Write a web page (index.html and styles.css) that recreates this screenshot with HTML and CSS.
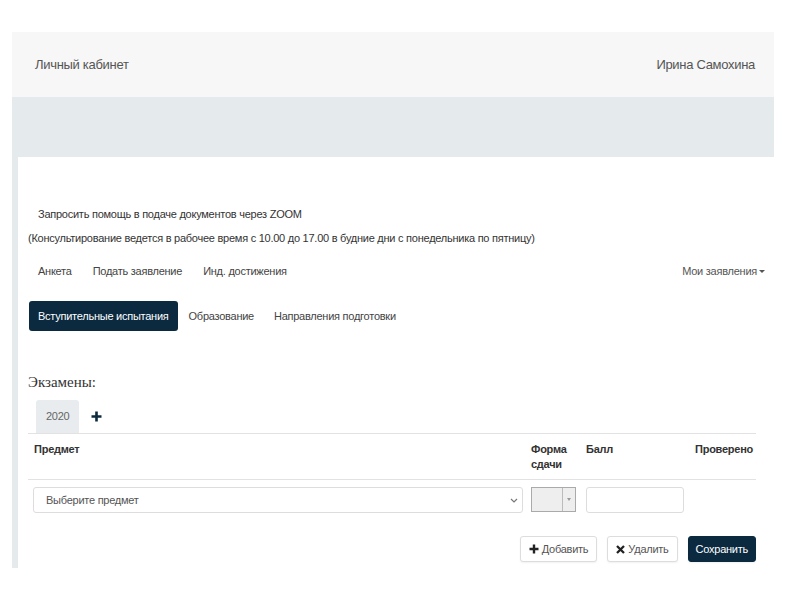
FILE: index.html
```html
<!DOCTYPE html>
<html lang="ru">

<head>
    <meta charset="UTF-8">
    <title>Личный кабинет</title>
    <link rel="stylesheet" href="styles.css">
</head>

<body>
    <div class="page">
        <header class="topbar">
            <span class="brand">Личный кабинет</span>
            <span class="user">Ирина Самохина</span>
        </header>
        <div class="band"></div>

        <div class="frame">
            <main class="card">
                <a class="help" href="#">Запросить помощь в подаче документов через ZOOM</a>
                <p class="note">(Консультирование ведется в рабочее время с 10.00 до 17.00 в будние дни с понедельника по пятницу)</p>

                <nav class="menu">
                    <div class="menu-left">
                        <a href="#">Анкета</a>
                        <a href="#">Подать заявление</a>
                        <a href="#">Инд. достижения</a>
                    </div>
                    <a href="#" class="dropdown">Мои заявления<span class="caret"></span></a>
                </nav>

                <div class="pills">
                    <a href="#" class="pill active">Вступительные испытания</a>
                    <a href="#" class="pill">Образование</a>
                    <a href="#" class="pill">Направления подготовки</a>
                </div>

                <h3 class="exams-title">Экзамены:</h3>
                <div class="year-tabs">
                    <span class="year-tab">2020</span>
                    <span class="add-year">
                        <svg width="11" height="11" viewBox="0 0 11 11"><path d="M5.5 0.5v10M0.5 5.5h10" stroke="#0b2a3f" stroke-width="2.6"/></svg>
                    </span>
                </div>

                <div class="grid head">
                    <div>Предмет</div>
                    <div>Форма<br>сдачи</div>
                    <div>Балл</div>
                    <div>Проверено</div>
                </div>
                <div class="grid row">
                    <div>
                        <div class="select">
                            <span>Выберите предмет</span>
                            <svg width="8" height="5" viewBox="0 0 8 5"><path d="M1 1l3 3 3-3" fill="none" stroke="#777" stroke-width="1.2"/></svg>
                        </div>
                    </div>
                    <div>
                        <div class="mini-select"><span class="mini-arrow"></span></div>
                    </div>
                    <div><input type="text" class="score"></div>
                    <div></div>
                </div>

                <div class="actions">
                    <button class="btn">
                        <svg width="10" height="10" viewBox="0 0 10 10"><path d="M5 0.5v9M0.5 5h9" stroke="#222" stroke-width="2.4"/></svg>
                        Добавить
                    </button>
                    <button class="btn">
                        <svg width="9" height="9" viewBox="0 0 9 9"><path d="M1 1l7 7M8 1l-7 7" stroke="#222" stroke-width="2.3"/></svg>
                        Удалить
                    </button>
                    <button class="btn dark">Сохранить</button>
                </div>
            </main>
        </div>
    </div>
</body>

</html>
```

FILE: styles.css
```css
* {
    margin: 0;
    padding: 0;
    box-sizing: border-box;
}

body {
    font-family: "Liberation Sans", Arial, sans-serif;
    font-size: 11px;
    letter-spacing: -0.25px;
    color: #444;
    background-color: #fff;
    padding-top: 32px;
}

a {
    text-decoration: none;
    color: #444;
}

.page {
    margin-left: 12px;
    width: 762px;
}

.topbar {
    height: 65px;
    background-color: #f7f7f7;
    display: flex;
    justify-content: space-between;
    align-items: center;
    padding: 0 19px 0 23px;
    font-size: 13px;
    letter-spacing: -0.3px;
    color: #555;
}

.band {
    height: 60px;
    background-color: #e5eaec;
}

.frame {
    background-color: #e5eaec;
    padding-left: 6px;
}

.card {
    background-color: #fff;
    height: 411px;
    padding: 49px 18px 0 10px;
}

.help {
    display: block;
    padding-left: 10px;
    line-height: 16px;
    color: #333;
}

.note {
    margin-top: 8px;
    line-height: 16px;
    color: #333;
}

.menu {
    display: flex;
    justify-content: space-between;
    align-items: center;
    margin-top: 16px;
    height: 17px;
}

.menu-left {
    display: flex;
    gap: 21px;
    padding-left: 10px;
}

.dropdown {
    color: #555;
    margin-right: -9px;
}

.caret {
    display: inline-block;
    margin-left: 2px;
    vertical-align: middle;
    border-top: 3px solid #555;
    border-left: 3px solid transparent;
    border-right: 3px solid transparent;
}

.pills {
    display: flex;
    align-items: center;
    gap: 2px;
    margin-top: 22px;
    margin-left: 1px;
}

.pill {
    padding: 0 9px;
    height: 30px;
    line-height: 30px;
}

.pill.active {
    background-color: #0b2a3f;
    color: #fff;
    border-radius: 3px;
}

.exams-title {
    font-family: "Liberation Serif", serif;
    font-weight: normal;
    font-size: 15px;
    letter-spacing: 0;
    color: #333;
    margin-top: 42px;
    line-height: 18px;
}

.year-tabs {
    display: flex;
    align-items: center;
    margin-top: 9px;
    margin-left: 8px;
    height: 33px;
}

.year-tab {
    background-color: #e8ecee;
    height: 33px;
    line-height: 33px;
    padding: 0 10px;
    border-radius: 3px 3px 0 0;
    color: #666;
}

.add-year {
    margin-left: 12px;
    display: flex;
}

.grid {
    display: grid;
    grid-template-columns: 497px 55px 109px 67px;
    border-top: 1px solid #e2e2e2;
}

.grid.head {
    height: 46px;
    padding-top: 8px;
    font-weight: bold;
    line-height: 15px;
    color: #333;
}

.grid > div {
    padding-left: 6px;
}

.grid.row {
    height: 40px;
    padding-top: 7px;
}

.grid.row > div:first-child {
    padding-left: 5px;
}

.select {
    height: 26px;
    width: 490px;
    border: 1px solid #ddd;
    border-radius: 3px;
    display: flex;
    align-items: center;
    justify-content: space-between;
    padding: 0 4px 0 12px;
    color: #555;
}

.mini-select {
    width: 45px;
    height: 25px;
    background-color: #eee;
    border: 1px solid #aaa;
    position: relative;
}

.mini-select::after {
    content: "";
    position: absolute;
    left: 30px;
    top: 0;
    bottom: 0;
    border-left: 1px solid #bbb;
}

.mini-arrow {
    position: absolute;
    left: 35px;
    top: 10px;
    border-top: 3px solid #999;
    border-left: 2px solid transparent;
    border-right: 2px solid transparent;
}

.score {
    width: 98px;
    height: 26px;
    border: 1px solid #ddd;
    border-radius: 3px;
}

.actions {
    display: flex;
    justify-content: flex-end;
    gap: 10px;
    margin-top: 17px;
    width: 728px;
}

.btn {
    font-family: inherit;
    font-size: 11px;
    letter-spacing: -0.25px;
    height: 26px;
    padding: 0 8px;
    background-color: #fff;
    color: #555;
    border: 1px solid #ddd;
    border-radius: 3px;
    box-shadow: 0 1px 2px rgba(0, 0, 0, 0.06);
    display: flex;
    align-items: center;
    gap: 3px;
}

.btn.dark {
    background-color: #0b2a3f;
    border-color: #0b2a3f;
    color: #fff;
    padding: 0 7px;
}
```
